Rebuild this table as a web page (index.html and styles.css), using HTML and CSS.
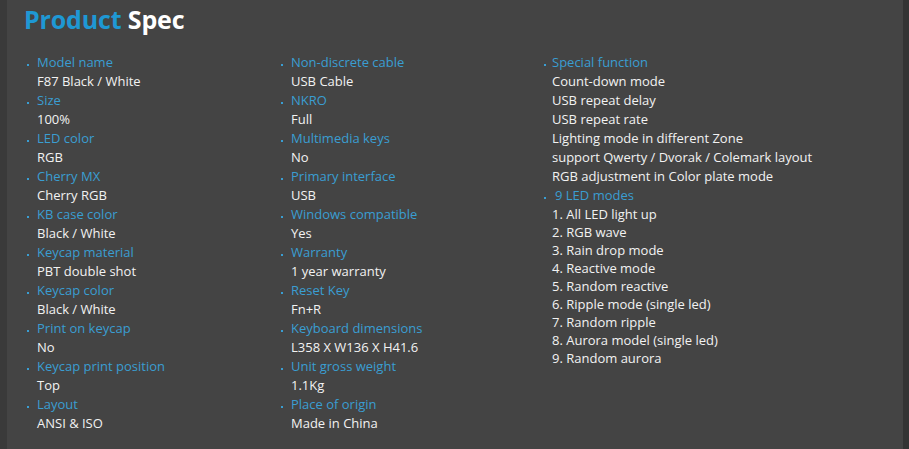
FILE: index.html
```html
<!DOCTYPE html>
<html>
<head>
<meta charset="utf-8">
<link rel="stylesheet" href="styles.css">
</head>
<body>
<div class="panel">
  <h1 class="title"><span class="blue">Product</span> Spec</h1>
  <div class="cols">
    <ul class="col">
      <li class="label">Model name</li><li class="val">F87 Black / White</li>
      <li class="label">Size</li><li class="val">100%</li>
      <li class="label">LED color</li><li class="val">RGB</li>
      <li class="label">Cherry MX</li><li class="val">Cherry RGB</li>
      <li class="label">KB case color</li><li class="val">Black / White</li>
      <li class="label">Keycap material</li><li class="val">PBT double shot</li>
      <li class="label">Keycap color</li><li class="val">Black / White</li>
      <li class="label">Print on keycap</li><li class="val">No</li>
      <li class="label">Keycap print position</li><li class="val">Top</li>
      <li class="label">Layout</li><li class="val">ANSI &amp; ISO</li>
    </ul>
    <ul class="col">
      <li class="label">Non-discrete cable</li><li class="val">USB Cable</li>
      <li class="label">NKRO</li><li class="val">Full</li>
      <li class="label">Multimedia keys</li><li class="val">No</li>
      <li class="label">Primary interface</li><li class="val">USB</li>
      <li class="label">Windows compatible</li><li class="val">Yes</li>
      <li class="label">Warranty</li><li class="val">1 year warranty</li>
      <li class="label">Reset Key</li><li class="val">Fn+R</li>
      <li class="label">Keyboard dimensions</li><li class="val">L358 X W136 X H41.6</li>
      <li class="label">Unit gross weight</li><li class="val">1.1Kg</li>
      <li class="label">Place of origin</li><li class="val">Made in China</li>
    </ul>
    <ul class="col col3">
      <li class="label">Special function</li>
      <li class="val">Count-down mode</li>
      <li class="val">USB repeat delay</li>
      <li class="val">USB repeat rate</li>
      <li class="val">Lighting mode in different Zone</li>
      <li class="val">support Qwerty / Dvorak / Colemark layout</li>
      <li class="val">RGB adjustment in Color plate mode</li>
      <li class="label indent">9 LED modes</li>
      <li class="val tight">1. All LED light up</li>
      <li class="val tight">2. RGB wave</li>
      <li class="val tight">3. Rain drop mode</li>
      <li class="val tight">4. Reactive mode</li>
      <li class="val tight">5. Random reactive</li>
      <li class="val tight">6. Ripple mode (single led)</li>
      <li class="val tight">7. Random ripple</li>
      <li class="val tight">8. Aurora model (single led)</li>
      <li class="val tight">9. Random aurora</li>
    </ul>
  </div>
</div>
</body>
</html>
```

FILE: styles.css
```css
html, body {
  margin: 0;
  padding: 0;
  background: #343434;
  height: 100%;
}
body {
  font-family: "Open Sans", "Noto Sans", sans-serif;
  overflow: hidden;
}
.panel {
  width: 896px;
  height: 449px;
  background: #444444;
  border-left: 7px solid #3a3a3a;
  box-sizing: content-box;
}
.title {
  margin: 0;
  padding: 2px 0 0 17px;
  font-size: 25px;
  font-weight: 700;
  line-height: 34px;
  color: #ffffff;
  letter-spacing: -0.15px;
}
.blue {
  color: #1e98d4;
}
.cols {
  display: grid;
  grid-template-columns: 254px 264px 1fr;
  padding: 17px 0 0 20px;
}
.col {
  list-style: none;
  margin: 0;
  padding: 0;
}
.col li {
  font-size: 13px;
  line-height: 19px;
  padding-left: 10px;
  white-space: nowrap;
}
.label {
  color: #3a9ed2;
  position: relative;
}
.label::before {
  content: "";
  position: absolute;
  left: 0;
  top: 11px;
  width: 2px;
  height: 2px;
  background: #3a9ed2;
}
.val {
  color: #f2f2f2;
}
.col3 li {
  padding-left: 7px;
}
.col3 .label::before {
  left: -1px;
}
.col3 .indent {
  padding-left: 10px;
}
.col3 .tight {
  line-height: 18px;
}
```
